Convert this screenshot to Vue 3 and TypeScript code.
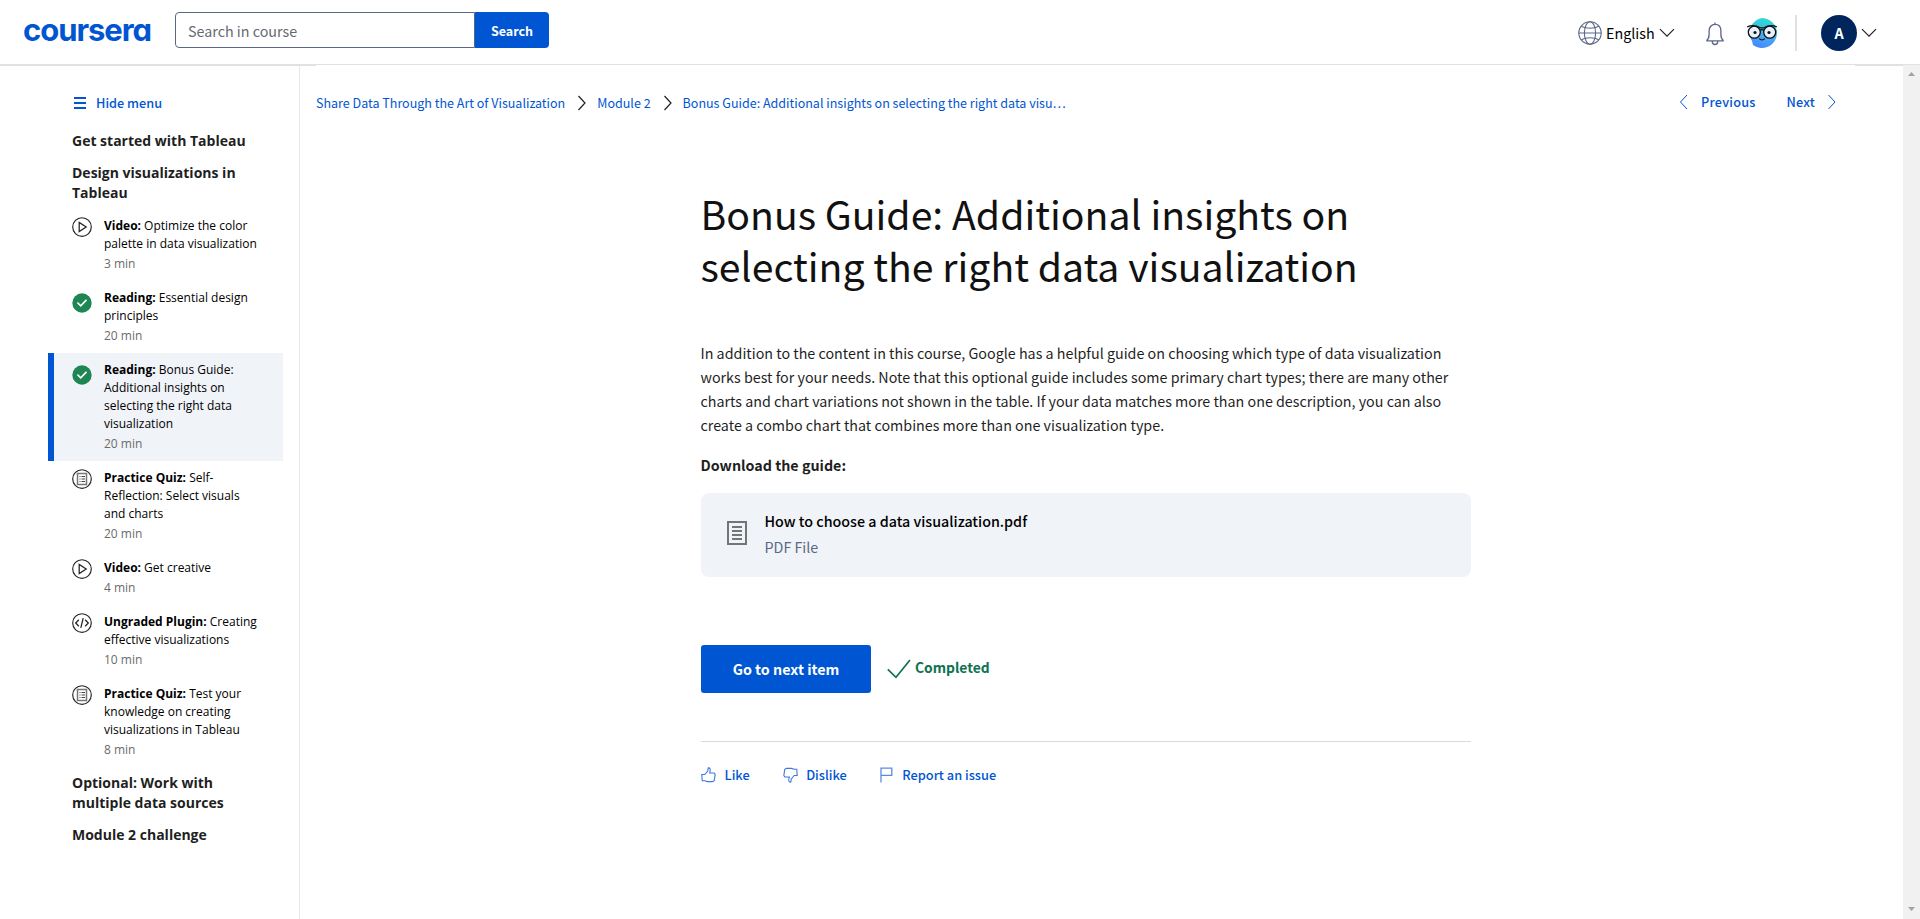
<script setup lang="ts">
type Kind = 'video' | 'done' | 'quiz' | 'plugin'

interface Lesson {
  kind: Kind
  label: string
  title: string
  time: string
  active?: boolean
}

const lessons: Lesson[] = [
  { kind: 'video', label: 'Video:', title: 'Optimize the color palette in data visualization', time: '3 min' },
  { kind: 'done', label: 'Reading:', title: 'Essential design principles', time: '20 min' },
  {
    kind: 'done',
    label: 'Reading:',
    title: 'Bonus Guide: Additional insights on selecting the right data visualization',
    time: '20 min',
    active: true,
  },
  { kind: 'quiz', label: 'Practice Quiz:', title: 'Self-Reflection: Select visuals and charts', time: '20 min' },
  { kind: 'video', label: 'Video:', title: 'Get creative', time: '4 min' },
  { kind: 'plugin', label: 'Ungraded Plugin:', title: 'Creating effective visualizations', time: '10 min' },
  { kind: 'quiz', label: 'Practice Quiz:', title: 'Test your knowledge on creating visualizations in Tableau', time: '8 min' },
]
</script>

<template>
  <div class="page">
    <header class="header">
      <svg class="logo" width="130" height="32" viewBox="0 0 130 32" aria-label="coursera">
        <text x="0" y="26" class="logo-text" textLength="129" lengthAdjust="spacing">coursera</text>
      </svg>
      <form class="search" @submit.prevent>
        <input class="search-input" type="text" placeholder="Search in course" />
        <button class="search-button" type="submit">Search</button>
      </form>
      <div class="tools">
        <svg class="globe" width="24" height="24" viewBox="0 0 24 24" fill="none" stroke="#5b6785" stroke-width="1.1">
          <circle cx="12" cy="12" r="11.2" />
          <ellipse cx="12" cy="12" rx="5.6" ry="11.2" />
          <path d="M.8 12h22.4M3.3 5.2c4.6 2.7 12.8 2.7 17.4 0M3.3 18.8c4.6-2.7 12.8-2.7 17.4 0" />
        </svg>
        <span class="language">English</span>
        <svg class="chev-lang" width="16" height="10" viewBox="0 0 16 10" fill="none" stroke="#1f1f1f" stroke-width="1.15">
          <path d="M1 1.2l7 7 7-7" />
        </svg>
        <svg class="bell" width="20" height="24" viewBox="0 0 20 24" fill="none" stroke="#5b6785" stroke-width="1.3">
          <path d="M10 .4v2M1.4 18.8h17.2M1.4 18.8c2.2-1.8 2.7-3.4 2.7-6.3V9c0-4 2.2-6.6 5.9-6.6S15.9 5 15.9 9v3.5c0 2.9.5 4.5 2.7 6.3M7.3 19v.8a2.7 2.7 0 0 0 5.4 0V19" />
        </svg>
        <svg class="coach" width="32" height="32" viewBox="0 0 32 32">
          <defs>
            <linearGradient id="coach-fill" x1=".65" y1="0" x2=".4" y2="1">
              <stop offset="0" stop-color="#2be0cf" />
              <stop offset=".5" stop-color="#42b5ee" />
              <stop offset="1" stop-color="#4a86ff" />
            </linearGradient>
          </defs>
          <path d="M16 1a15 15 0 1 1-9 27l-1-4A15 15 0 0 1 16 1z" fill="url(#coach-fill)" />
          <circle cx="8.3" cy="15.2" r="6" fill="#e8f0fc" stroke="#111" stroke-width="1.3" />
          <circle cx="23.7" cy="15.2" r="6" fill="#e8f0fc" stroke="#111" stroke-width="1.3" />
          <path d="M14.1 13.2c1.2-.7 2.600-.7 3.800 0M1.200 9.900c4-1.800 9-1.400 13 .9h3.600c4-2.300 9-2.700 13-.9" fill="none" stroke="#111" stroke-width="1.2" />
          <circle cx="9" cy="15.500" r="1.600" fill="#111" />
          <circle cx="23" cy="15.500" r="1.600" fill="#111" />
          <path d="M13.200 21.700c1.500 1.700 4.100 1.700 5.600 0" fill="none" stroke="#111" stroke-width="1.1" />
        </svg>
        <span class="separator"></span>
        <span class="avatar">A</span>
        <svg class="chev-user" width="16" height="10" viewBox="0 0 16 10" fill="none" stroke="#1f1f1f" stroke-width="1.15">
          <path d="M1 1.2l7 7 7-7" />
        </svg>
      </div>
    </header>

    <div class="body">
      <aside class="sidebar">
        <button class="hide-menu">
          <svg width="12" height="12" viewBox="0 0 12 12" fill="#0056d2">
            <path d="M0 0h12v2H0zM0 5h12v2H0zM0 10h12v2H0z" />
          </svg>
          <span>Hide menu</span>
        </button>
        <h2 class="section first">Get started with Tableau</h2>
        <h2 class="section">Design visualizations in Tableau</h2>
        <ul class="lessons">
          <li v-for="(lesson, i) in lessons" :key="i" class="lesson" :class="[lesson.kind, { active: lesson.active }]">
            <svg class="lesson-icon" width="20" height="20" viewBox="0 0 20 20" fill="none">
              <circle v-if="lesson.kind === 'done'" cx="10" cy="10" r="9.7" fill="#1d8653" />
              <circle v-else cx="10" cy="10" r="9.3" stroke="#222" stroke-width="1.15" />
              <path v-if="lesson.kind === 'video'" d="M7.2 5.4v9.200l7-4.600z" stroke="#222" stroke-width="1.25" />
              <path v-else-if="lesson.kind === 'done'" d="M5.400 9.500l3.300 3.400 5.800-6" stroke="#fff" stroke-width="1.6" />
              <template v-else-if="lesson.kind === 'quiz'">
                <rect x="5.500" y="4.500" width="9" height="11" stroke="#777" stroke-width="1.5" />
                <path d="M7.500 7.500h1M7.500 10h1M7.500 12.500h1M9.500 7.500h3.500M9.500 10h3.500M9.500 12.500h3.500" stroke="#444" stroke-width="1" />
              </template>
              <path v-else d="M6.800 6.800L3.700 10l3.100 3.200M13.200 6.800l3.100 3.200-3.100 3.200M11.200 5.200L8.800 14.800" stroke="#222" stroke-width="1.25" />
            </svg>
            <div class="lesson-text">
              <p class="lesson-title"><strong>{{ lesson.label }}</strong> {{ lesson.title }}</p>
              <p class="lesson-time">{{ lesson.time }}</p>
            </div>
          </li>
        </ul>
        <h2 class="section after">Optional: Work with multiple data sources</h2>
        <h2 class="section">Module 2 challenge</h2>
      </aside>

      <main class="main">
        <div class="topbar">
          <nav class="crumbs">
            <a>Share Data Through the Art of Visualization</a>
            <svg width="10" height="16" viewBox="0 0 10 16" fill="none" stroke="#1f1f1f" stroke-width="1.2"><path d="M1.500 1l6.500 7-6.500 7" /></svg>
            <a>Module 2</a>
            <svg width="10" height="16" viewBox="0 0 10 16" fill="none" stroke="#1f1f1f" stroke-width="1.2"><path d="M1.500 1l6.500 7-6.500 7" /></svg>
            <a>Bonus Guide: Additional insights on selecting the right data visu…</a>
          </nav>
          <nav class="pager">
            <a class="prev">
              <svg width="10" height="16" viewBox="0 0 10 16" fill="none" stroke="#0056d2" stroke-width="1"><path d="M8 1L1.500 8 8 15" /></svg>
              <span>Previous</span>
            </a>
            <a class="next">
              <span>Next</span>
              <svg width="10" height="16" viewBox="0 0 10 16" fill="none" stroke="#0056d2" stroke-width="1"><path d="M1.500 1l6.500 7-6.500 7" /></svg>
            </a>
          </nav>
        </div>

        <article class="article">
          <h1 class="title">Bonus Guide: Additional insights on<br />selecting the right data visualization</h1>
          <p class="intro">
            In addition to the content in this course, Google has a helpful guide on choosing which type of data visualization<br />
            works best for your needs. Note that this optional guide includes some primary chart types; there are many other<br />
            charts and chart variations not shown in the table. If your data matches more than one description, you can also<br />
            create a combo chart that combines more than one visualization type.
          </p>
          <p class="download">Download the guide:</p>
          <a class="file">
            <svg width="20" height="24" viewBox="0 0 20 24" fill="none" stroke="#757575">
              <rect x="1" y="1" width="18" height="22" stroke-width="2" />
              <path d="M5 6h10M5 10h10M5 14h10M5 18h10" stroke-width="1.8" />
            </svg>
            <span class="file-text">
              <span class="file-name">How to choose a data visualization.pdf</span>
              <span class="file-type">PDF File</span>
            </span>
          </a>
          <div class="actions">
            <button class="go-next">Go to next item</button>
            <svg class="tick" width="24" height="20" viewBox="0 0 24 20" fill="none" stroke="#0f7250" stroke-width="1.7"><path d="M.8 10.300l8.200 8L23 1" /></svg>
            <span class="completed">Completed</span>
          </div>
          <div class="feedback">
            <a class="like">
              <svg width="15" height="16" viewBox="0 0 15 16" fill="none" stroke="#3f78de" stroke-width="1.1"><path d="M.8 7.500h3l2.900-3.400.5-3.200c2-.2 2.600 1.200 1.500 5.100h4.500l1 1.700-1 6-1.600.9H6.300L4 13.700H1.200z" /></svg>
              <span>Like</span>
            </a>
            <a class="dislike">
              <svg width="15" height="16" viewBox="0 0 15 16" fill="none" stroke="#3f78de" stroke-width="1.1"><path d="M14.200 8.500h-3l-2.900 3.400-.5 3.200c-2 .2-2.600-1.200-1.500-5.100H1.800l-1-1.700 1-6 1.600-.9h5.300L11 2.300h2.800z" /></svg>
              <span>Dislike</span>
            </a>
            <a class="report">
              <svg width="14" height="16" viewBox="0 0 14 16" fill="none" stroke="#5a8be4" stroke-width="1.3"><path d="M1 15.500V1.100h10.800v7.200H1" /></svg>
              <span>Report an issue</span>
            </a>
          </div>
        </article>
      </main>

      <div class="scrollbar">
        <svg width="7" height="4" viewBox="0 0 7 4" fill="#a3a3a3"><path d="M0 4h7L3.500 0z" /></svg>
        <svg width="7" height="4" viewBox="0 0 7 4" fill="#a3a3a3"><path d="M0 0h7L3.500 4z" /></svg>
      </div>
    </div>
  </div>
</template>

<style>
body {
  margin: 0;
  background: #fff;
}
</style>

<style scoped>
* {
  box-sizing: border-box;
}
.page {
  width: 1920px;
  height: 919px;
  overflow: hidden;
  background: #fff;
  color: #1f1f1f;
  font-family: "Noto Sans CJK SC", "Open Sans", sans-serif;
  font-size: 14.3px;
}
h1, h2, p, ul {
  margin: 0;
  padding: 0;
}
svg {
  flex: none;
  display: block;
}
button {
  border: 0;
  padding: 0;
  font-family: inherit;
}
.header {
  display: flex;
  height: 66px;
  border-bottom: 2px solid #e1e1e1;
  padding-left: 23px;
}
.logo {
  margin-top: 15px;
  overflow: visible;
}
.logo-text {
  font-family: Inter, sans-serif;
  font-weight: 700;
  font-size: 31px;
  font-feature-settings: "cv11";
  fill: #0056d2;
}
.search {
  display: flex;
  height: 36px;
  margin: 12px 0 0 22px;
}
.search-input {
  width: 300px;
  height: 36px;
  padding: 0 12px;
  border: 1px solid #5b6785;
  border-radius: 4px 0 0 4px;
  outline: 0;
  font-family: inherit;
  font-size: 14.3px;
}
.search-input::placeholder {
  color: #666a73;
  opacity: 1;
}
.search-button {
  width: 74px;
  height: 36px;
  background: #0056d2;
  border-radius: 0 4px 4px 0;
  color: #fff;
  font-weight: 700;
  font-size: 12.5px;
}
.tools {
  display: flex;
  align-items: center;
  height: 66px;
  margin-left: auto;
}
.language {
  margin: 0 5px 0 4px;
  width: 48px;
  line-height: 24px;
  color: #000;
}
.bell {
  margin: 2px 0 0 30px;
}
.coach {
  margin-left: 21px;
}
.separator {
  width: 2px;
  height: 36px;
  margin-left: 17px;
  background: #e1e1e1;
}
.avatar {
  width: 36px;
  height: 36px;
  margin: 0 4px 0 24px;
  border-radius: 50%;
  background: #00255d;
  color: #fff;
  font-weight: 700;
  line-height: 36px;
  text-align: center;
}
.chev-user {
  margin-right: 43px;
}
.body {
  display: flex;
  height: 853px;
}
.sidebar {
  width: 300px;
  padding: 27px 16px 0 48px;
  border-right: 1px solid #e5e7f0;
}
.hide-menu {
  display: flex;
  align-items: center;
  gap: 10px;
  height: 20px;
  margin-left: 26px;
  background: none;
  color: #0056d2;
  font-weight: 500;
  font-size: 12.7px;
  line-height: 20px;
}
.section {
  margin: 0 0 12px 24px;
  width: 200px;
  font-family: "Open Sans", sans-serif;
  font-weight: 700;
  font-size: 14px;
  line-height: 20px;
}
.section.first {
  margin-top: 18px;
}
.section.after {
  margin-top: 6px;
}
.lessons {
  margin-top: -6px;
  list-style: none;
}
.lesson {
  display: flex;
  gap: 12px;
  padding: 8px 20px 8px 24px;
}
.lesson.active {
  padding-left: 18px;
  border-left: 6px solid #0056d2;
  background: #f0f3f8;
}
.done .lesson-icon {
  margin-top: 4px;
}
.lesson-text {
  width: 160px;
  font-family: "Open Sans", sans-serif;
  font-size: 12px;
  line-height: 18px;
  color: #000;
}
.lesson-time {
  padding-top: 2px;
  color: #6b6b6b;
}
.main {
  width: 1603px;
  padding-left: 16px;
}
.topbar {
  position: relative;
  display: flex;
  justify-content: space-between;
  width: 1539px;
  height: 54px;
  margin-top: -1px;
  padding: 28px 18px 0 0;
  background: #fff;
  font-size: 12.52px;
  line-height: 20px;
  color: #0056d2;
}
.crumbs {
  display: flex;
  height: 20px;
  white-space: nowrap;
}
.crumbs svg {
  margin: 2px 10px 0 12px;
}
.pager {
  display: flex;
  height: 20px;
  margin-top: -1px;
  font-weight: 500;
  font-size: 12.7px;
  letter-spacing: 0.2px;
}
.prev,
.next {
  display: flex;
  align-items: center;
  gap: 12px;
}
.next {
  margin-left: 31px;
}
.article {
  width: 770px;
  margin: 68px 0 0 385px;
}
.title {
  margin-left: -0.5px;
  color: #111;
  font-weight: 400;
  font-size: 39.2px;
  line-height: 52px;
}
.intro {
  margin: 50px 0 0 -0.5px;
  font-size: 14.31px;
  line-height: 24px;
  white-space: nowrap;
}
.download {
  margin: 16px 0 0 -0.5px;
  font-weight: 700;
  line-height: 24px;
}
.file {
  display: flex;
  height: 84px;
  margin-top: 16px;
  padding: 16px 26px;
  border-radius: 8px;
  background: #f0f3f8;
}
.file svg {
  margin-top: 12px;
}
.file-text {
  display: flex;
  flex-direction: column;
  gap: 2px;
  margin-left: 17.5px;
  line-height: 24px;
}
.file-name {
  color: #000;
  font-weight: 500;
}
.file-type {
  color: #5b6785;
}
.actions {
  display: flex;
  margin-top: 68px;
  height: 48px;
}
.go-next {
  width: 170px;
  background: #0056d2;
  border-radius: 3px;
  color: #fff;
  font-weight: 700;
  font-size: 14.3px;
  line-height: 48px;
}
.tick {
  margin: 14px 0 0 16px;
}
.completed {
  margin: 10px 0 0 4px;
  height: 24px;
  line-height: 24px;
  color: #0f7250;
  font-weight: 700;
  font-size: 13.85px;
}
.feedback {
  display: flex;
  height: 48px;
  margin-top: 48px;
  padding-top: 23px;
  border-top: 1px solid #dadada;
  color: #0056d2;
  font-weight: 500;
  font-size: 12.8px;
  line-height: 20px;
}
.feedback a {
  display: flex;
  gap: 8.5px;
}
.feedback svg {
  margin-top: 2px;
}
.dislike {
  margin-left: 33px;
}
.report {
  margin-left: 33px;
}
.scrollbar {
  display: flex;
  flex-direction: column;
  align-items: center;
  justify-content: space-between;
  width: 17px;
  margin-top: -1px;
  padding: 7px 0 8px;
  background: #f1f1f1;
}
</style>
